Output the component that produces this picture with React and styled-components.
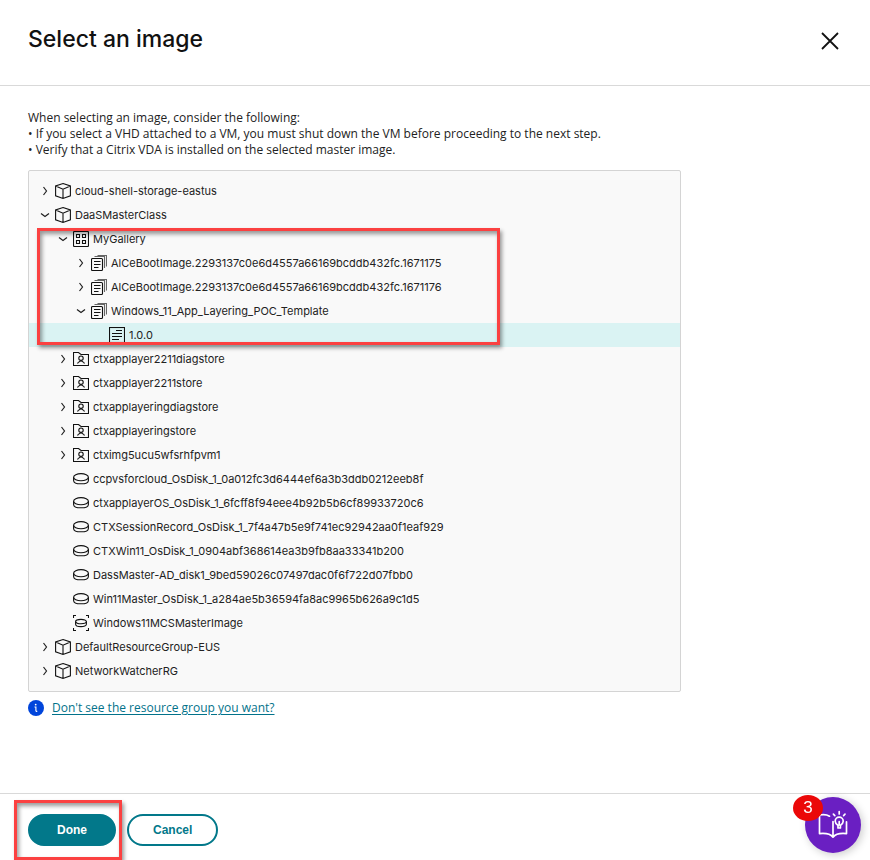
import { useState } from "react";
import styled, { createGlobalStyle } from "styled-components";

const tree = [
  { name: "cloud-shell-storage-eastus", type: "group", children: [] },
  {
    name: "DaaSMasterClass",
    type: "group",
    open: true,
    children: [
      {
        name: "MyGallery",
        type: "gallery",
        open: true,
        marked: true,
        children: [
          {
            name: "AlCeBootImage.2293137c0e6d4557a66169bcddb432fc.1671175",
            type: "definition",
            children: [],
          },
          {
            name: "AlCeBootImage.2293137c0e6d4557a66169bcddb432fc.1671176",
            type: "definition",
            children: [],
          },
          {
            name: "Windows_11_App_Layering_POC_Template",
            type: "definition",
            open: true,
            children: [{ name: "1.0.0", type: "version" }],
          },
        ],
      },
      { name: "ctxapplayer2211diagstore", type: "storage", children: [] },
      { name: "ctxapplayer2211store", type: "storage", children: [] },
      { name: "ctxapplayeringdiagstore", type: "storage", children: [] },
      { name: "ctxapplayeringstore", type: "storage", children: [] },
      { name: "ctximg5ucu5wfsrhfpvm1", type: "storage", children: [] },
      {
        name: "ccpvsforcloud_OsDisk_1_0a012fc3d6444ef6a3b3ddb0212eeb8f",
        type: "disk",
      },
      {
        name: "ctxapplayerOS_OsDisk_1_6fcff8f94eee4b92b5b6cf89933720c6",
        type: "disk",
      },
      {
        name: "CTXSessionRecord_OsDisk_1_7f4a47b5e9f741ec92942aa0f1eaf929",
        type: "disk",
      },
      {
        name: "CTXWin11_OsDisk_1_0904abf368614ea3b9fb8aa33341b200",
        type: "disk",
      },
      {
        name: "DassMaster-AD_disk1_9bed59026c07497dac0f6f722d07fbb0",
        type: "disk",
      },
      {
        name: "Win11Master_OsDisk_1_a284ae5b36594fa8ac9965b626a9c1d5",
        type: "disk",
      },
      { name: "Windows11MCSMasterImage", type: "image" },
    ],
  },
  { name: "DefaultResourceGroup-EUS", type: "group", children: [] },
  { name: "NetworkWatcherRG", type: "group", children: [] },
];

const icons = {
  group: (
    <path d="M8 0.6 15.4 3V12.8L8 15.4 0.6 12.8V3ZM0.6 3 8 6.2 15.4 3M8 6.2V15.4" />
  ),
  gallery: (
    <>
      <rect x="0.5" y="0.5" width="15" height="15" rx="1" />
      <path d="M3.5 3.5h3v3h-3zM9.5 3.5h3v3h-3zM3.5 9.5h3v3h-3zM9.5 9.5h3v3h-3z" />
    </>
  ),
  definition: (
    <>
      <rect x="0.5" y="3.5" width="11" height="12" rx="1" />
      <path d="M3 6.5H9.5M3 9.5H9.5M3 12.5H7.5" />
      <path d="M3.5 1.5H13.5V13M6.5 0.5H15.5V11.5" stroke="#666" />
    </>
  ),
  version: (
    <>
      <rect x="0.5" y="0.5" width="15" height="15" />
      <path d="M7 3.5H13M3 6.5H13M3 9.5H13M3 12.5H10" />
    </>
  ),
  storage: (
    <>
      <path d="M0.5 14.5V1.5H5.5L8 3.5H15.5V14.5Z" />
      <circle cx="8" cy="7.2" r="2.2" />
      <path d="M4.5 12.5C5 10.8 6.8 10.6 8 9.6 9.2 10.6 11 10.8 11.5 12.5" />
    </>
  ),
  disk: (
    <>
      <ellipse cx="8" cy="6.2" rx="7.4" ry="3.6" />
      <path d="M0.6 6.2V9.4C0.6 11.4 3.9 12.8 8 12.8S15.4 11.4 15.4 9.4V6.2" />
    </>
  ),
  image: (
    <>
      <path d="M0.5 3V0.5H3M13 0.5H15.5V3M15.5 13V15.5H13M3 15.5H0.5V13" />
      <ellipse cx="8" cy="6.6" rx="5.4" ry="2.2" />
      <path d="M2.6 6.6V9.2C2.6 10.6 5 11.6 8 11.6S13.4 10.6 13.4 9.2V6.6" />
    </>
  ),
};

function TreeNode({ node, depth, selected, onSelect }) {
  const [open, setOpen] = useState(Boolean(node.open));

  return (
    <Node>
      <Row $depth={depth} $selected={selected === node.name}>
        {node.children ? (
          <Toggle
            type="button"
            aria-expanded={open}
            aria-label={node.name}
            onClick={() => setOpen(!open)}
          >
            <Chevron viewBox="0 0 10 10" $open={open}>
              <path d="M3.5 1 6.5 5 3.5 9" />
            </Chevron>
          </Toggle>
        ) : (
          <Spacer />
        )}
        <NodeButton type="button" onClick={() => onSelect(node.name)}>
          <NodeIcon viewBox="0 0 16 16">{icons[node.type]}</NodeIcon>
          {node.name}
        </NodeButton>
      </Row>
      {open && node.children.length > 0 && (
        <NodeList>
          {node.children.map((child) => (
            <TreeNode
              key={child.name}
              node={child}
              depth={depth + 1}
              selected={selected}
              onSelect={onSelect}
            />
          ))}
        </NodeList>
      )}
      {node.marked && <TreeMark />}
    </Node>
  );
}

function App() {
  const [selected, setSelected] = useState("1.0.0");

  return (
    <>
      <GlobalStyle />
      <Page>
        <Header>
          <Title>Select an image</Title>
          <CloseButton type="button" aria-label="Close">
            <svg width="18" height="18" viewBox="0 0 18 18">
              <path d="M1 1 17 17M17 1 1 17" stroke="#111" strokeWidth="1.8" />
            </svg>
          </CloseButton>
        </Header>
        <Content>
          <Intro>
            <p>When selecting an image, consider the following:</p>
            <p>
              • If you select a VHD attached to a VM, you must shut down the VM
              before proceeding to the next step.
            </p>
            <p>
              • Verify that a Citrix VDA is installed on the selected master
              image.
            </p>
          </Intro>
          <TreeBox>
            <NodeList>
              {tree.map((node) => (
                <TreeNode
                  key={node.name}
                  node={node}
                  depth={0}
                  selected={selected}
                  onSelect={setSelected}
                />
              ))}
            </NodeList>
          </TreeBox>
          <Help>
            <svg width="16" height="16" viewBox="0 0 16 16">
              <circle cx="8" cy="8" r="8" fill="#0045db" />
              <circle cx="7.7" cy="4.6" r="0.9" fill="#fff" />
              <path
                d="M6.5 7H7.9V10.4C7.9 11.2 8.4 11.5 9.3 11.3"
                fill="none"
                stroke="#fff"
                strokeWidth="1.1"
              />
            </svg>
            <a href="#resource-group">Don't see the resource group you want?</a>
          </Help>
        </Content>
        <Footer>
          <DoneWrapper>
            <Button type="button" $primary>
              Done
            </Button>
            <DoneMark />
          </DoneWrapper>
          <Button type="button">Cancel</Button>
        </Footer>
        <GuideButton type="button" aria-label="Guide, 3 new items">
          <svg width="30" height="30" viewBox="0 0 30 30">
            <g
              fill="none"
              stroke="#fff"
              strokeWidth="1.7"
              strokeLinecap="round"
              strokeLinejoin="round"
            >
              <path d="M11.5 6.2C9 4.6 5 4.4 1.5 5V23.6C7 23 12.5 24 15 27.2 17.5 24 23 23 28.5 23.6V11.8M15 11.5V27" />
              <path d="M20 15.4C18 13.8 17.2 12.8 17.2 11.2A4 4 0 0 1 25.2 11.2C25.2 12.8 24.4 13.8 22.4 15.4V18H20ZM21.2 11.5V15" />
              <path d="M21.2 1.6V4M15.4 4.2 16.8 5.6M27 4.2 25.6 5.6" />
            </g>
          </svg>
          <Badge>3</Badge>
        </GuideButton>
      </Page>
    </>
  );
}

export default App;

const GlobalStyle = createGlobalStyle`
  * {
    box-sizing: border-box;
  }

  body {
    margin: 0;
    background-color: #fff;
    color: #222;
    font-family: "Open Sans", sans-serif;
    font-size: 12px;
  }

  button {
    padding: 0;
    border: none;
    background: none;
    color: inherit;
    font: inherit;
    cursor: pointer;
  }
`;

const Page = styled.div`
  min-height: 100vh;
  display: flex;
  flex-direction: column;
`;

const Header = styled.header`
  height: 86px;
  padding: 0 28px 4px;
  display: flex;
  justify-content: space-between;
  align-items: center;
  border-bottom: 1px solid #d9d9d9;
`;

const Title = styled.h1`
  margin: 0;
  padding-bottom: 4px;
  color: #111;
  font-family: Inter, sans-serif;
  font-size: 23px;
  font-weight: 500;
  line-height: 32px;
`;

const CloseButton = styled.button`
  width: 24px;
  height: 24px;
  display: flex;
  justify-content: center;
  align-items: center;
`;

const Content = styled.main`
  flex: 1;
  padding: 24px 28px;
`;

const Intro = styled.div`
  margin-bottom: 12px;
  line-height: 16px;

  p {
    margin: 0;
  }
`;

const TreeBox = styled.div`
  max-width: 653px;
  padding: 8px 0;
  border: 1px solid #d4d4d4;
  border-radius: 2px;
  background-color: #f9f9f9;
`;

const NodeList = styled.ul`
  margin: 0;
  padding: 0;
  list-style: none;
`;

const Node = styled.li`
  position: relative;
`;

const Row = styled.div`
  height: 24px;
  padding-left: ${({ $depth }) => 8 + $depth * 18}px;
  display: flex;
  align-items: center;
  gap: 2px;
  background-color: ${({ $selected }) =>
    $selected ? "#daf3f3" : "transparent"};
`;

const Toggle = styled.button`
  width: 16px;
  height: 16px;
  display: flex;
  justify-content: center;
  align-items: center;
`;

const Spacer = styled.span`
  width: 16px;
`;

const Chevron = styled.svg`
  width: 10px;
  height: 10px;
  fill: none;
  stroke: #222;
  stroke-width: 1.2;
  transform: rotate(${({ $open }) => ($open ? 90 : 0)}deg);
`;

const NodeButton = styled.button`
  && {
    display: flex;
    align-items: center;
    gap: 4px;
    font-family: Inter, sans-serif;
    font-size: 11px;
    line-height: 16px;
    white-space: nowrap;
  }
`;

const NodeIcon = styled.svg`
  width: 16px;
  height: 16px;
  flex-shrink: 0;
  fill: none;
  stroke: #111;
  stroke-width: 1.1;
`;

const Mark = styled.div`
  position: absolute;
  border: 3px solid #fb4141;
  box-shadow:
    2px 3px 4px rgba(0, 0, 0, 0.4),
    inset 2px 3px 4px rgba(0, 0, 0, 0.4);
  pointer-events: none;
`;

const TreeMark = styled(Mark)`
  top: 1px;
  bottom: 2px;
  left: 8px;
  width: 463px;
`;

const DoneMark = styled(Mark)`
  top: -14px;
  right: -6px;
  bottom: -14px;
  left: -14px;
`;

const Help = styled.div`
  margin-top: 8px;
  display: flex;
  align-items: center;
  gap: 8px;
  line-height: 16px;

  a {
    color: #02728a;
    text-underline-offset: 2px;
  }
`;

const Footer = styled.footer`
  height: 67px;
  padding: 20px 28px 14px;
  display: flex;
  gap: 11px;
  border-top: 1px solid #d9d9d9;
`;

const DoneWrapper = styled.div`
  position: relative;
`;

const Button = styled.button`
  && {
    min-width: 88px;
    height: 32px;
    padding: 0 24px;
    border: 2px solid #02788a;
    border-radius: 16px;
    background-color: ${({ $primary }) => ($primary ? "#02788a" : "#fff")};
    color: ${({ $primary }) => ($primary ? "#fff" : "#02788a")};
    font-family: "Liberation Sans", Arial, sans-serif;
    font-weight: 700;
  }
`;

const GuideButton = styled.button`
  && {
    position: fixed;
    right: 9px;
    bottom: 7px;
    width: 56px;
    height: 56px;
    display: flex;
    justify-content: center;
    align-items: center;
    border-radius: 50%;
    background-color: #6a1fc2;
    box-shadow: 2px 2px 8px rgba(0, 0, 0, 0.2);
  }
`;

const Badge = styled.span`
  position: absolute;
  top: -2px;
  left: -12px;
  width: 30px;
  height: 26px;
  border-radius: 50%;
  background-color: #eb0808;
  color: #fff;
  font-family: "Liberation Sans", Arial, sans-serif;
  font-size: 17px;
  line-height: 26px;
  text-align: center;
`;
